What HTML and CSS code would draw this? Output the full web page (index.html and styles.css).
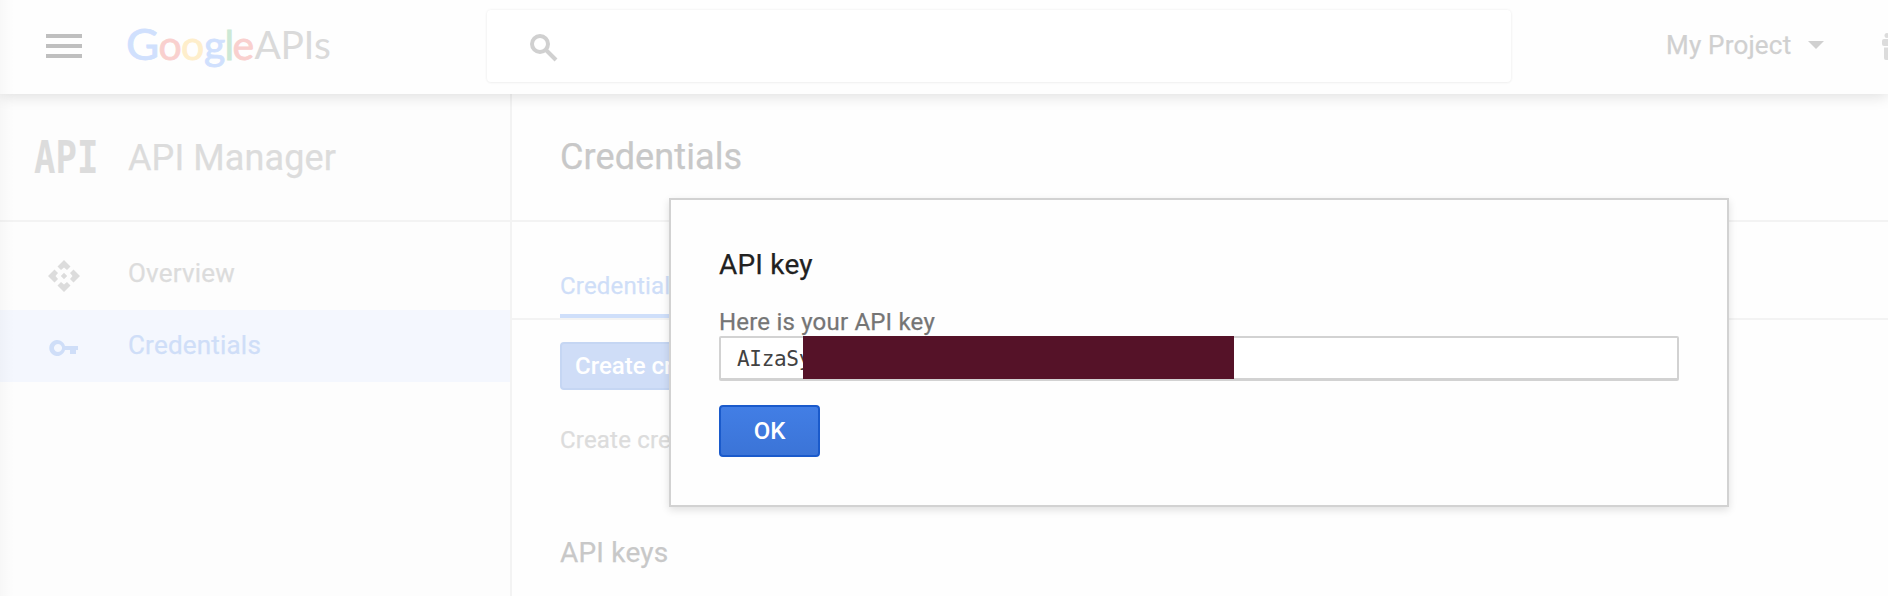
FILE: index.html
```html
<!DOCTYPE html>
<html lang="en">
<head>
<meta charset="utf-8">
<title>API Manager</title>
<link rel="stylesheet" href="styles.css">
</head>
<body>
<div class="app">
  <header class="topbar">
    <div class="menu"><span></span><span></span><span></span></div>
    <svg class="logo" width="210" height="60" viewBox="0 0 210 60">
      <g class="logo-google">
        <text class="blue logo-cap" transform="scale(1.06 1)" x="-2" y="43">G</text>
        <text class="red" x="30.500" y="43">o</text>
        <text class="yellow" x="53" y="43">o</text>
        <text class="blue" x="76" y="43">g</text>
        <text class="green" x="96.500" y="43">l</text>
        <text class="red" x="104.500" y="43">e</text>
      </g>
      <text class="logo-apis" x="126.500 152.500 175.500 186" y="42">APIs</text>
    </svg>
    <div class="search">
      <svg width="28" height="28" viewBox="0 0 28 28"><circle cx="10" cy="10" r="8" fill="none" stroke="#d0d0d0" stroke-width="4"/><path d="M16 16L26 26" stroke="#d0d0d0" stroke-width="4"/></svg>
    </div>
    <div class="project"><span>My Project</span><i class="caret"></i></div>
    <svg class="gift" width="28" height="28" viewBox="0 0 28 28" fill="#dcdcdc"><circle cx="5" cy="2.500" r="2.500"/><rect y="6" width="28" height="7" rx="2"/><path d="M2 14.500H26V25Q26 27 24 27H4Q2 27 2 25Z"/></svg>
  </header>
  <div class="body">
    <nav class="sidebar">
      <div class="product">
        <svg class="mark" width="64" height="34" viewBox="0 0 64 34"><text class="api-mark" transform="scale(.81 1)" x="0" y="33">API</text></svg>
        <span>API Manager</span>
      </div>
      <ul class="nav">
        <li>
          <svg width="32" height="32" viewBox="0 0 32 32" fill="#dcdcdc"><path d="M16 0L22.500 6.500L19 10L16 7.500L13 10L9.500 6.500ZM16 32L22.500 25.500L19 22L16 24.500L13 22L9.500 25.500ZM0 16L6.500 9.500L10 13L7.500 16L10 19L6.500 22.500ZM32 16L25.500 9.500L22 13L24.500 16L22 19L25.500 22.500ZM16 12.800L19.200 16L16 19.200L12.800 16Z"/></svg>
          <span>Overview</span>
        </li>
        <li class="active">
          <svg width="32" height="32" viewBox="0 0 32 32" fill="#cfdef8"><path fill-rule="evenodd" d="M17 14A8 8 0 1 0 17 18H22V22H28V18H30V14ZM10 12A4 4 0 1 1 9.990 12Z"/></svg>
          <span>Credentials</span>
        </li>
      </ul>
    </nav>
    <main class="main">
      <h1>Credentials</h1>
      <div class="tabs"><span class="tab">Credentials</span></div>
      <div class="content">
        <button class="create">Create credentials</button>
        <p>Create credentials</p>
        <h2>API keys</h2>
      </div>
    </main>
  </div>
  <div class="edge"></div>
  <section class="dialog">
    <h3>API key</h3>
    <p>Here is your API key</p>
    <div class="key">AIzaSy<span class="mask"></span></div>
    <button class="ok">OK</button>
  </section>
</div>
</body>
</html>
```
FILE: styles.css
```css
* { box-sizing: border-box; }
body { margin: 0; font-family: Roboto, sans-serif; font-size: 26px; letter-spacing: .2px; -webkit-text-stroke: .25px; background: #fefefe; }
h1, h2, h3, p, ul { margin: 0; padding: 0; font-weight: 400; }
button { font-family: inherit; letter-spacing: 0; -webkit-text-stroke: 0; display: block; text-align: left; }
.app { position: relative; width: 1888px; height: 596px; overflow: hidden; display: flex; flex-direction: column; }

.topbar { position: relative; z-index: 1; height: 94px; flex: none; display: flex; align-items: flex-start; background: #fefefe; box-shadow: 0 2px 14px rgba(0,0,0,.13); }
.topbar > * { flex: none; }
.menu { width: 36px; margin: 34px 46px 0; display: grid; gap: 6px; }
.menu span { height: 4px; background: #bfbfbf; }
.logo { margin-top: 17px; overflow: visible; letter-spacing: 0; -webkit-text-stroke: 0; }
.logo-google { font: 400 41px Lato, sans-serif; stroke-width: .8px; }
.logo-cap { font-size: 43px; }
.logo-apis { font: 39px Lato, sans-serif; fill: #dadada; }
.blue { fill: #d0e0fd; stroke: #d0e0fd; }
.red { fill: #f9d0ce; stroke: #f9d0ce; }
.yellow { fill: #feeecb; stroke: #feeecb; }
.green { fill: #cde9d5; stroke: #cde9d5; }
.search { width: 1024px; height: 72px; margin: 10px 1px 0 149px; padding: 24px 43px; border-radius: 4px; background: #fff; box-shadow: 0 0 3px rgba(0,0,0,.07), 0 1px 3px rgba(0,0,0,.03); }
.project { width: 158px; display: flex; align-items: center; justify-content: space-between; margin: 30px 0 0 154px; line-height: 30px; color: #d0d0d0; white-space: nowrap; }
.caret { border: 8px solid transparent; border-top-color: #d0d0d0; border-bottom: 0; }
.gift { margin: 33px 0 0 58px; }

.body { flex: 1; display: flex; }
.sidebar { width: 512px; flex: none; border-right: 2px solid #f3f3f3; background: #fdfdfd; color: #dcdcdc; }
.product { height: 128px; display: flex; align-items: center; gap: 30px; padding-left: 34px; border-bottom: 2px solid #f3f3f3; font-size: 36px; letter-spacing: .1px; }
.product span { margin-top: 2px; }
.mark { overflow: visible; }
.api-mark { font: 700 44px "DejaVu Sans Mono", monospace; letter-spacing: 0; fill: #dcdcdc; }
.nav { list-style: none; padding-top: 16px; }
.nav li { height: 72px; display: flex; align-items: center; gap: 48px; padding-left: 48px; }
.nav svg { margin-top: 4px; }
.nav span { margin-top: -2px; }
.nav .active { background: #f4f7fe; color: #cfdef8; }

.main { flex: 1; }
.main h1 { height: 128px; padding-left: 48px; line-height: 126px; font-size: 36px; letter-spacing: .1px; color: #c8c8c8; border-bottom: 2px solid #f3f3f3; }
.tabs { height: 98px; padding: 44px 48px 0; border-bottom: 2px solid #f3f3f3; display: flex; font-size: 24px; color: #cfdef8; }
.tab { height: 52px; line-height: 40px; border-bottom: 4px solid #cfdffa; }
.content { padding: 22px 48px; color: #dcdcdc; }
.create { height: 48px; padding: 0 13px; border: 2px solid #c5d6f3; border-radius: 4px; background: #cfddf7; color: #fff; font-size: 24px; font-weight: 500; }
.content p { margin-top: 35px; font-size: 24px; line-height: 30px; }
.content h2 { margin-top: 80px; font-size: 28px; line-height: 36px; color: #c8c8c8; }

.edge { position: absolute; z-index: 2; inset: 0 auto 0 0; width: 14px; background: linear-gradient(90deg, rgba(0,0,0,.025), transparent); }

.dialog { position: absolute; z-index: 3; left: 669px; top: 198px; width: 1060px; height: 309px; padding: 47px 48px; border: 2px solid #d2d2d2; background: #fefefe; box-shadow: 0 3px 8px rgba(0,0,0,.12); }
.dialog h3 { font-size: 28px; line-height: 36px; color: #212121; }
.dialog p { margin-top: 25px; font-size: 24px; line-height: 28px; color: #757575; }
.key { position: relative; height: 45px; padding-left: 16px; border: 2px solid #d2d2d2; border-bottom-width: 3px; border-radius: 2px; background: #fff; font: 21px/42px "DejaVu Sans Mono", monospace; letter-spacing: -.3px; -webkit-text-stroke: 0; color: #424242; }
.mask { position: absolute; left: 82px; top: -2px; width: 431px; height: 43px; background: #551228; }
.ok { width: 101px; height: 52px; margin-top: 24px; padding: 0; border: 2px solid #1a5acb; border-radius: 4px; background: linear-gradient(#427ee5, #3b74d7); color: #fff; font-size: 24px; font-weight: 500; text-align: center; }
```
